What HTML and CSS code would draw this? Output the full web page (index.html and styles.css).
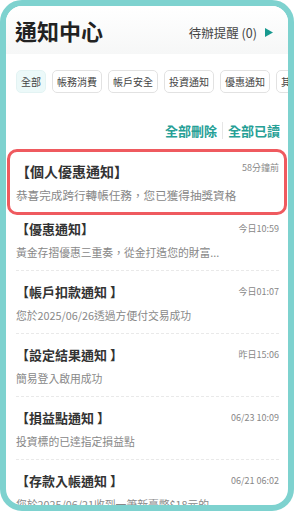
FILE: index.html
```html
<html>
    <head>
        <meta charset="utf-8">
        <link rel="stylesheet" href="styles.css">
    </head>
    <body>
        <div class="phone">
            <div class="header">
                <h1>通知中心</h1>
                <div class="todo">待辦提醒 (0)
                    <svg width="8" height="9" viewBox="0 0 8 9"><polygon points="0,0 8,4.5 0,9" fill="#17998f"/></svg>
                </div>
            </div>
            <div class="tabs">
                <span class="tab active">全部</span>
                <span class="tab">帳務消費</span>
                <span class="tab">帳戶安全</span>
                <span class="tab">投資通知</span>
                <span class="tab">優惠通知</span>
                <span class="tab">其他</span>
            </div>
            <div class="actions">
                <a href="#">全部刪除</a>
                <span class="bar"></span>
                <a href="#">全部已讀</a>
            </div>
            <div class="list">
                <div class="item highlight">
                    <div class="row">
                        <div class="title">【個人優惠通知】</div>
                        <div class="time">58分鐘前</div>
                    </div>
                    <div class="desc">恭喜完成跨行轉帳任務，您已獲得抽獎資格</div>
                </div>
                <div class="item">
                    <div class="row">
                        <div class="title">【優惠通知】</div>
                        <div class="time">今日10:59</div>
                    </div>
                    <div class="desc">黃金存摺優惠三重奏，從金打造您的財富...</div>
                </div>
                <div class="item">
                    <div class="row">
                        <div class="title">【帳戶扣款通知 】</div>
                        <div class="time">今日01:07</div>
                    </div>
                    <div class="desc">您於2025/06/26透過方便付交易成功</div>
                </div>
                <div class="item">
                    <div class="row">
                        <div class="title">【設定結果通知 】</div>
                        <div class="time">昨日15:06</div>
                    </div>
                    <div class="desc">簡易登入啟用成功</div>
                </div>
                <div class="item">
                    <div class="row">
                        <div class="title">【損益點通知 】</div>
                        <div class="time">06/23 10:09</div>
                    </div>
                    <div class="desc">投資標的已達指定損益點</div>
                </div>
                <div class="item">
                    <div class="row">
                        <div class="title">【存款入帳通知 】</div>
                        <div class="time">06/21 06:02</div>
                    </div>
                    <div class="desc">您於2025/06/21收到一筆新臺幣$18元的</div>
                </div>
            </div>
        </div>
    </body>
</html>
```

FILE: styles.css
```css
body{
    margin: 0;
    background: #fff;
    font-family: "Noto Sans CJK TC", "Noto Sans", sans-serif;
}
.phone{
    width: 294px;
    height: 511px;
    box-sizing: border-box;
    border: 6px solid #7ed2cf;
    border-radius: 22px;
    overflow: hidden;
    background: #fff;
}
.header{
    height: 48px;
    display: flex;
    align-items: center;
    justify-content: space-between;
    padding: 0 15px 0 9px;
    background: linear-gradient(#fff, #f6f7f7);
}
.header h1{
    margin: 0;
    font-size: 22px;
    font-weight: 700;
    color: #222;
    line-height: 1;
}
.todo{
    display: flex;
    align-items: center;
    gap: 8px;
    margin-top: 4px;
    font-size: 12.5px;
    color: #444;
}
.tabs{
    display: flex;
    gap: 6px;
    margin-top: 16px;
    padding-left: 10px;
    white-space: nowrap;
    overflow: hidden;
}
.tab{
    flex: none;
    height: 23px;
    line-height: 21px;
    box-sizing: border-box;
    padding: 0 4px;
    font-size: 10px;
    color: #444;
    border: 1px solid #e2e2e2;
    border-radius: 5px;
    background: #fff;
}
.tab.active{
    background: #ecf9f9;
    border-color: #e3f3f3;
}
.actions{
    display: flex;
    justify-content: flex-end;
    align-items: center;
    height: 20px;
    margin-top: 27px;
    padding-right: 8px;
}
.actions a{
    font-size: 13px;
    font-weight: 600;
    color: #26a096;
    text-decoration: none;
}
.actions .bar{
    width: 1px;
    height: 17px;
    background: #e6e6e6;
    margin: 0 5px 0 5px;
}
.list{
    margin-top: 9px;
    padding: 0 9px 0 10px;
}
.item{
    padding: 10px 0 8px;
    border-bottom: 1px dashed #e9e9e9;
}
.row{
    display: flex;
    justify-content: space-between;
    align-items: center;
    height: 20px;
}
.title{
    font-size: 13px;
    font-weight: 700;
    color: #333;
}
.time{
    font-size: 9px;
    color: #888;
}
.desc{
    margin-top: 4px;
    height: 20px;
    line-height: 20px;
    font-size: 10.8px;
    color: #888;
    white-space: nowrap;
    overflow: hidden;
}
.item.highlight{
    position: relative;
    z-index: 1;
    margin: 0 -8px -7px -9px;
    padding: 9px 5px 7px 6px;
    border: 3px solid #ef5a5f;
    border-radius: 10px;
}
.highlight .title{
    font-size: 14px;
}
.highlight .time{
    margin-top: -8px;
}
.highlight .desc{
    font-size: 11.6px;
}
```
